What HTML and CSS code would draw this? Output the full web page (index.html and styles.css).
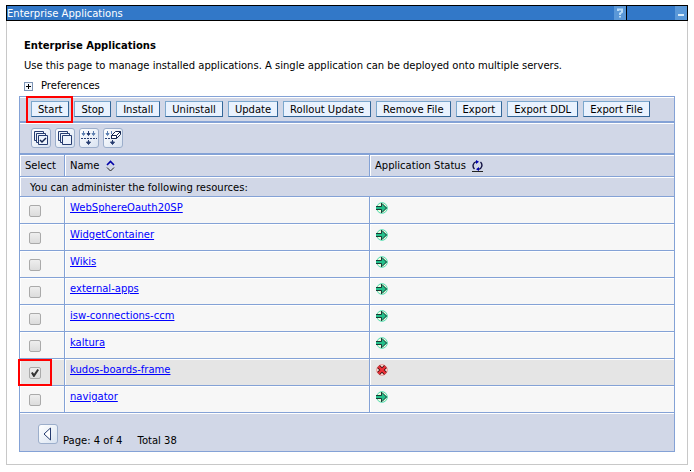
FILE: index.html
```html
<!DOCTYPE html>
<html lang="en">
<head>
<meta charset="utf-8">
<title>Enterprise Applications</title>
<link rel="stylesheet" href="styles.css">
</head>
<body>
<svg class="defs" aria-hidden="true">
  <symbol id="running" viewBox="0 0 12 12">
    <circle cx="6" cy="6" r="5.300" fill="#effbe0" stroke="#4fdcae"/>
    <path d="M0 4.500h5V1l6.500 5L5 11V7.500H0z" fill="#23c08a"/>
    <path d="M0 4.500h5.500M0 7.500h5.500M5.500 1v3.500M5.500 7.500V11M6 1.500L10.500 6 6 10.500" fill="none" stroke="#1d3a35"/>
    <path d="M0 6h9" stroke="#23c08a" stroke-width="2"/>
  </symbol>
  <symbol id="stopped" viewBox="0 0 12 12">
    <circle cx="6" cy="6" r="5.300" fill="#fff0e8" stroke="#f58a8a"/>
    <path d="M2.500 2.500l7 7M9.500 2.500l-7 7" stroke="#4a1515" stroke-width="4"/>
    <path d="M2.500 2.500l7 7M9.500 2.500l-7 7" stroke="#f03038" stroke-width="2.400"/>
  </symbol>
</svg>
<main class="portlet">
  <header class="titlebar">
    <span class="titlebar-text">Enterprise Applications</span>
    <button class="title-button" type="button" aria-label="Help"><svg viewBox="0 0 12 12"><path d="M4 4V2.500h4V5L6 6.500V8M6 9v1.500" fill="none" stroke="#b9dcf8" stroke-width="2"/></svg></button>
    <span class="titlebar-end"><button class="title-button" type="button" aria-label="Minimize"><svg viewBox="0 0 12 12"><path d="M3 8h6" stroke="#d8ecfb" stroke-width="2"/></svg></button></span>
  </header>
  <div class="content">
    <h1>Enterprise Applications</h1>
    <p class="intro">Use this page to manage installed applications. A single application can be deployed onto multiple servers.</p>
    <div class="preferences">
      <button class="expand" type="button" aria-label="Expand preferences"><svg viewBox="0 0 7 7"><path d="M1 3.500h5M3.500 1v5" stroke="#000"/></svg></button>
      <span>Preferences</span>
    </div>
    <section class="grid">
      <div class="actions">
        <span class="marked"><button type="button">Start</button></span>
        <button type="button">Stop</button>
        <button type="button">Install</button>
        <button type="button">Uninstall</button>
        <button type="button">Update</button>
        <button type="button">Rollout Update</button>
        <button type="button">Remove File</button>
        <button type="button">Export</button>
        <button type="button">Export DDL</button>
        <button type="button">Export File</button>
      </div>
      <div class="tools">
        <button class="tool" type="button" aria-label="Select all"><svg viewBox="0 0 18 18"><g fill="#edf3fb" stroke="#263c70"><path d="M2.500 2.500h9v9h-9z"/><path d="M4.500 4.500h9v9h-9z"/><path d="M6.500 6.500h9v9h-9z"/></g><path d="M8 11l2 2 4-4" fill="none" stroke="#14254f" stroke-width="1.500"/></svg></button>
        <button class="tool" type="button" aria-label="Deselect all"><svg viewBox="0 0 18 18"><g fill="#edf3fb" stroke="#263c70"><path d="M2.500 2.500h9v9h-9z"/><path d="M4.500 4.500h9v9h-9z"/><path d="M6.500 6.500h9v9h-9z"/></g></svg></button>
        <button class="tool" type="button" aria-label="Show filter"><svg viewBox="0 0 18 18"><path d="M1 9.500h16" stroke="#263c70" stroke-dasharray="2 1"/><g fill="#5d7fb0" stroke="#5d7fb0"><path d="M3.500 2v4M2 4.500h3L3.500 6.500zM13.500 2v4M12 4.500h3l-1.500 2z"/></g><g fill="#263c70" stroke="#263c70"><path d="M8.500 2v4M7 4.500h3L8.500 6.500zM8.500 11v4M6.500 13h4L8.500 15.500z"/></g></svg></button>
        <button class="tool" type="button" aria-label="Clear filter"><svg viewBox="0 0 18 18"><path d="M1 9.500h8" stroke="#263c70" stroke-dasharray="2 1"/><g fill="#5d7fb0" stroke="#5d7fb0"><path d="M3.500 2v4M2 4.500h3L3.500 6.500zM7.500 2v3"/></g><path d="M8.500 11v4M6.500 13h4L8.500 15.500z" fill="#263c70" stroke="#263c70"/><path d="M7.500 6.500l4-4h5v3l-4 4h-5zM7.500 6.500h5v3M12.500 6.500l4-4" fill="#fff" stroke="#14254f"/></svg></button>
      </div>
      <table>
        <colgroup><col class="col-select"><col class="col-name"><col class="col-status"></colgroup>
        <thead>
          <tr>
            <th scope="col">Select</th>
            <th scope="col"><span class="heading">Name <svg class="sort" viewBox="0 0 9 12"><path d="M1 5l3.500-3.500L8 5" fill="none" stroke="#0000a8" stroke-width="1.600"/><path d="M1 7.500L4.500 11 8 7.500" fill="none" stroke="#222"/></svg></span></th>
            <th scope="col"><span class="heading">Application Status <a href="#refresh" class="refresh" aria-label="Refresh status"><svg viewBox="0 0 11 11"><g fill="none" stroke="#101040" stroke-width="1.400"><path d="M2.500 9A4.300 4.300 0 0 1 4.500 1.600M8.500 2A4.300 4.300 0 0 1 6.500 9.400"/></g><path d="M4 0l3 1.800L4 4zM7 7L4 9.200 7 11z" fill="#0000b0"/></svg></a></span></th>
          </tr>
          <tr><th class="note" colspan="3">You can administer the following resources:</th></tr>
        </thead>
        <tbody>
          <tr><td><input type="checkbox" aria-label="Select WebSphereOauth20SP"></td><td><a href="#app">WebSphereOauth20SP</a></td><td><svg class="status" role="img" aria-label="Started"><use href="#running"/></svg></td></tr>
          <tr><td><input type="checkbox" aria-label="Select WidgetContainer"></td><td><a href="#app">WidgetContainer</a></td><td><svg class="status" role="img" aria-label="Started"><use href="#running"/></svg></td></tr>
          <tr><td><input type="checkbox" aria-label="Select Wikis"></td><td><a href="#app">Wikis</a></td><td><svg class="status" role="img" aria-label="Started"><use href="#running"/></svg></td></tr>
          <tr><td><input type="checkbox" aria-label="Select external-apps"></td><td><a href="#app">external-apps</a></td><td><svg class="status" role="img" aria-label="Started"><use href="#running"/></svg></td></tr>
          <tr><td><input type="checkbox" aria-label="Select isw-connections-ccm"></td><td><a href="#app">isw-connections-ccm</a></td><td><svg class="status" role="img" aria-label="Started"><use href="#running"/></svg></td></tr>
          <tr><td><input type="checkbox" aria-label="Select kaltura"></td><td><a href="#app">kaltura</a></td><td><svg class="status" role="img" aria-label="Started"><use href="#running"/></svg></td></tr>
          <tr class="selected"><td class="marked-cell"><input type="checkbox" checked aria-label="Select kudos-boards-frame"></td><td><a href="#app">kudos-boards-frame</a></td><td><svg class="status" role="img" aria-label="Stopped"><use href="#stopped"/></svg></td></tr>
          <tr><td><input type="checkbox" aria-label="Select navigator"></td><td><a href="#app">navigator</a></td><td><svg class="status" role="img" aria-label="Started"><use href="#running"/></svg></td></tr>
        </tbody>
      </table>
      <footer class="pager">
        <button class="tool" type="button" aria-label="Previous page"><svg viewBox="0 0 18 18"><path d="M11.500 3v12L5 9z" fill="#fff" stroke="#263c70"/></svg></button>
        <span class="page">Page: 4 of 4</span>
        <span>Total 38</span>
      </footer>
    </section>
  </div>
</main>
<div class="end"></div>
</body>
</html>
```
FILE: styles.css
```css
* { box-sizing: border-box; }

body {
  margin: 0;
  padding: 5px 6px 0;
  background: #fff;
  color: #000;
  font: 10px/14px Verdana, "DejaVu Sans", sans-serif;
}

.defs { display: none; }
svg { display: block; }

button {
  margin: 0;
  color: #000;
  font: inherit;
}

.portlet {
  border: 1px solid #c8c8c8;
  border-top: 0;
}

.titlebar {
  display: flex;
  height: 16px;
  margin: 0 -1px;
  border: 1px solid #000;
  background: #3278c8;
  color: #fff;
}

.titlebar-text { flex: 1; padding-top: 1px; }

.titlebar-end {
  display: flex;
  justify-content: flex-end;
  width: 61px;
  border-left: 1px solid #000;
}

.title-button {
  width: 12px;
  height: 14px;
  padding: 1px 0;
  border: 0;
  background: #5a98d8;
}

.title-button svg { width: 12px; height: 12px; }

.content { padding: 18px 12px 12px; }

h1 {
  margin: 0;
  font-size: 10px;
  line-height: 14px;
  padding-left: 5px;
}

.intro { margin: 6px 0; padding-left: 5px; }

.preferences {
  display: flex;
  align-items: center;
  gap: 8px;
  padding-left: 5px;
  margin-bottom: 3px;
}

.expand {
  width: 9px;
  height: 9px;
  padding: 0;
  border: 1px solid #7d94b5;
  background: #f4f8fd;
}

.expand svg { width: 7px; height: 7px; }

.grid {
  border: 1px solid #84a2d6;
  background: #d1d7e7;
}

.actions {
  display: flex;
  gap: 5px;
  height: 26px;
  padding: 3px 11px;
  border-top: 1px solid #fff;
  border-bottom: 2px solid #84a2d6;
}

.actions button {
  display: block;
  height: 16px;
  padding: 1px 6px 0;
  border: 1px solid #7ba7cd;
  border-right-color: #336699;
  border-bottom-color: #336699;
  background: #e9f2fe;
  line-height: 13px;
  white-space: nowrap;
}

.marked { position: relative; }

.marked::after {
  content: "";
  position: absolute;
  inset: -5px -4px -5px -5px;
  border: 2px solid #f00;
  pointer-events: none;
}

.tools {
  display: flex;
  gap: 4px;
  height: 32px;
  padding: 4px 11px;
  border-top: 1px solid #fff;
  border-bottom: 2px solid #84a2d6;
}

.tool {
  width: 20px;
  height: 20px;
  padding: 0;
  border: 1px solid #9caecb;
  border-radius: 3px;
  background: linear-gradient(135deg, #fff, #d9e3f1);
}

.tool svg { width: 18px; height: 18px; }

table {
  width: 100%;
  table-layout: fixed;
  border-spacing: 0;
}

.col-select { width: 45px; }
.col-name { width: 305px; }

th, td {
  padding: 0 5px;
  border-right: 1px solid #84a2d6;
  border-bottom: 1px solid #84a2d6;
  box-shadow: inset 1px 1px #fff;
  text-align: left;
  font-weight: normal;
}

th:last-child, td:last-child { border-right: 0; }
th { height: 22px; padding-top: 1px; }
th.note { height: 20px; padding: 2px 10px 0; }

.heading { display: flex; align-items: center; gap: 6px; }
.sort { width: 9px; height: 12px; }
.refresh { border-bottom: 1px solid #222; }
.refresh svg { width: 11px; height: 11px; }

td {
  height: 27px;
  padding-top: 4px;
  background: #f7f7f7;
  vertical-align: top;
}

.selected td { background: #e5e5e5; }
td a { color: #00f; }

input[type="checkbox"] {
  appearance: none;
  display: block;
  width: 12px;
  height: 12px;
  margin: 4px 0 0 4px;
  border: 1px solid #aaa;
  border-radius: 2px;
  background: linear-gradient(#eee, #dcdcdc);
}

input[type="checkbox"]:checked::before {
  content: "";
  display: block;
  width: 8px;
  height: 8px;
  margin: 1px;
  background: #333;
  clip-path: polygon(0 50%, 20% 38%, 38% 58%, 80% 0, 100% 14%, 42% 100%, 30% 100%);
}

.marked-cell { position: relative; }

.marked-cell::after {
  content: "";
  position: absolute;
  inset: 0 12px -1px -2px;
  border: 2px solid #f00;
  pointer-events: none;
}

.status { width: 12px; height: 12px; margin: 1px 0 0 1px; }

.pager {
  display: flex;
  align-items: flex-end;
  gap: 5px;
  height: 38px;
  padding: 0 18px 3px;
  border-top: 1px solid #fff;
}

.pager .tool { margin-bottom: 4px; }
.page { margin-right: 10px; }

.end {
  width: 1px;
  height: 1px;
  margin: 5px -3px 0 auto;
  background: #000;
}
```
